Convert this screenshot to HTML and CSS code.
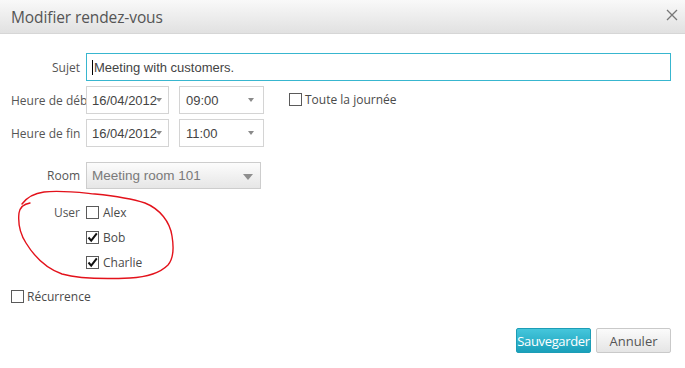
FILE: index.html
```html
<!DOCTYPE html>
<html lang="fr">
<head>
<meta charset="utf-8">
<title>Modifier rendez-vous</title>
<link rel="stylesheet" href="styles.css">
</head>
<body>
<div class="dialog">
  <div class="titlebar">
    <span class="title">Modifier rendez-vous</span>
    <svg class="close" width="12" height="12" viewBox="0 0 12 12"><path d="M1 1 L11 11 M11 1 L1 11" stroke="#777" stroke-width="1.3" fill="none"/></svg>
  </div>
  <div class="body">
    <div class="row">
      <label class="lbl">Sujet</label>
      <div class="input subject"><span class="caret"></span>Meeting with customers.</div>
    </div>
    <div class="row">
      <label class="lbl">Heure de début</label>
      <div class="input date">16/04/2012<span class="arrow small"></span></div>
      <div class="input time">09:00<span class="arrow small"></span></div>
      <label class="chk allday"><span class="box"></span>Toute la journée</label>
    </div>
    <div class="row gap-lg">
      <label class="lbl">Heure de fin</label>
      <div class="input date">16/04/2012<span class="arrow small"></span></div>
      <div class="input time">11:00<span class="arrow small"></span></div>
    </div>
    <div class="row room-row">
      <label class="lbl">Room</label>
      <div class="select">Meeting room 101<span class="arrow big"></span></div>
    </div>
    <div class="user-block">
      <label class="lbl ulbl">User</label>
      <div class="users">
        <label class="chk urow"><span class="box"></span>Alex</label>
        <label class="chk urow"><span class="box checked"><svg width="11" height="11" viewBox="0 0 11 11"><path d="M1.5 5.5 L4.2 8.6 L9.8 1.4" stroke="#111" stroke-width="2" fill="none"/></svg></span>Bob</label>
        <label class="chk urow"><span class="box checked"><svg width="11" height="11" viewBox="0 0 11 11"><path d="M1.5 5.5 L4.2 8.6 L9.8 1.4" stroke="#111" stroke-width="2" fill="none"/></svg></span>Charlie</label>
      </div>
    </div>
    <div class="recur">
      <label class="chk"><span class="box"></span>Récurrence</label>
    </div>
    <div class="actions">
      <button class="btn primary">Sauvegarder</button>
      <button class="btn">Annuler</button>
    </div>
  </div>
  <svg class="scribble" width="685" height="368" viewBox="0 0 685 368">
    <path d="M22 204 C 28 196, 36 193, 44 192 C 60 190, 75 192, 95 194 C 115 196, 130 198, 145 203 C 160 209, 170 222, 172 236 C 174 248, 174 258, 168 265 C 160 273, 148 277, 130 278 C 108 279, 80 279, 62 274 C 45 268, 34 256, 26 243 C 19 232, 18 222, 19 213 C 20 207, 24 204, 30 203" stroke="#e3121b" stroke-width="1.4" fill="none" stroke-linecap="round"/>
  </svg>
</div>
</body>
</html>
```

FILE: styles.css
```css
html, body {
  margin: 0;
  padding: 0;
  background: #fff;
}
body {
  font-family: "Open Sans", "DejaVu Sans", sans-serif;
  font-size: 12px;
  color: #555;
}
.dialog {
  position: relative;
  width: 685px;
  height: 368px;
  overflow: hidden;
}
.titlebar {
  box-sizing: border-box;
  height: 34px;
  border-bottom: 1px solid #d6d6d6;
  background: linear-gradient(#f9f9f9, #e1e1e1);
  display: flex;
  align-items: center;
  justify-content: space-between;
  padding: 0 7px 0 11px;
}
.title {
  font-size: 15.5px;
  color: #555;
  letter-spacing: -0.1px;
}
.close {
  display: block;
  margin-top: -4px;
}
.body {
  padding: 19px 14px 0 11px;
}
.row {
  display: flex;
  align-items: center;
  height: 28px;
  margin-bottom: 5px;
}
.row.gap-lg {
  margin-bottom: 15px;
}
.row.room-row {
  height: 27px;
  margin-bottom: 11px;
}
.lbl {
  box-sizing: border-box;
  flex: 0 0 75px;
  width: 75px;
  padding-right: 6px;
  text-align: right;
  white-space: nowrap;
  overflow: hidden;
}
.input {
  position: relative;
  box-sizing: border-box;
  height: 28px;
  border: 1px solid #d4d4d4;
  display: flex;
  align-items: center;
  font-family: "Liberation Sans", Arial, sans-serif;
  font-size: 13px;
  color: #444;
  background: #fff;
}
.subject {
  width: 595px;
  border-color: #38b6cf;
  padding-left: 5px;
}
.caret {
  display: inline-block;
  width: 1px;
  height: 15px;
  background: #000;
  margin-right: 1px;
}
.date {
  width: 83px;
  padding-left: 5px;
  margin-right: 10px;
}
.time {
  width: 85px;
  padding-left: 6px;
}
.arrow {
  position: absolute;
  width: 0;
  height: 0;
  border-left: 3.5px solid transparent;
  border-right: 3.5px solid transparent;
  border-top: 4px solid #8a8a8a;
}
.date .arrow {
  left: 69px;
  top: 11px;
}
.time .arrow {
  left: 68px;
  top: 11px;
}
.select {
  position: relative;
  box-sizing: border-box;
  width: 175px;
  height: 27px;
  border: 1px solid #cdcdcd;
  background: linear-gradient(#fcfcfc, #e6e6e6);
  display: flex;
  align-items: center;
  padding-left: 5px;
  font-family: "Liberation Sans", Arial, sans-serif;
  font-size: 13.5px;
  color: #7a7a7a;
}
.arrow.big {
  right: 7px;
  top: 11px;
  border-left-width: 5.5px;
  border-right-width: 5.5px;
  border-top-width: 6px;
  border-top-color: #8e8e8e;
}
.chk {
  display: flex;
  align-items: center;
  color: #4a4a4a;
  white-space: nowrap;
}
.box {
  box-sizing: border-box;
  width: 13px;
  height: 13px;
  border: 1px solid #5a5a5a;
  background: #fff;
  margin-right: 3px;
  display: flex;
  align-items: center;
  justify-content: center;
  flex: 0 0 13px;
}
.box svg {
  display: block;
}
.allday {
  margin-left: 25px;
  margin-top: -2px;
}
.user-block {
  display: flex;
  align-items: flex-start;
}
.ulbl {
  line-height: 25px;
  height: 25px;
}
.users {
  display: flex;
  flex-direction: column;
}
.urow {
  height: 25px;
}
.urow .box {
  margin-right: 4px;
}
.recur {
  display: flex;
  height: 25px;
  margin-top: 9px;
}
.actions {
  display: flex;
  justify-content: flex-end;
  gap: 5px;
  margin-top: 19px;
}
.btn {
  box-sizing: border-box;
  width: 75px;
  height: 25px;
  padding: 0;
  border: 1px solid #c9c9c9;
  border-radius: 2px;
  background: linear-gradient(#fbfbfb, #e5e5e5);
  font-family: "Open Sans", "DejaVu Sans", sans-serif;
  font-size: 13px;
  color: #555;
}
.btn.primary {
  border-color: #1c9db6;
  background: linear-gradient(#45c6dc, #1aa0ba);
  color: #fff;
  letter-spacing: -0.35px;
}
.scribble {
  position: absolute;
  left: 0;
  top: 0;
  pointer-events: none;
}
```
